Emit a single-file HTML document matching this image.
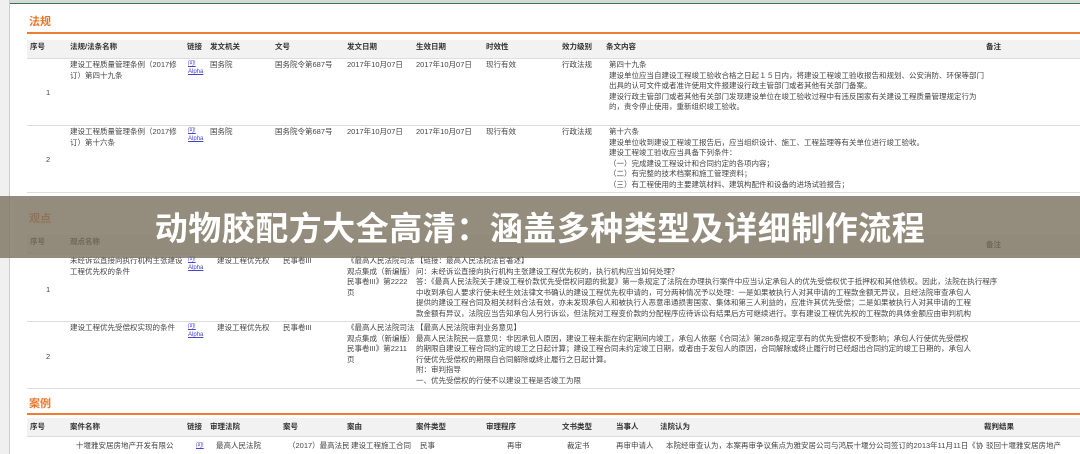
<!DOCTYPE html>
<html><head><meta charset="utf-8"><style>
*{margin:0;padding:0;box-sizing:border-box}
body{width:1080px;height:454px;overflow:hidden;background:#fff;position:relative;font-family:"Liberation Sans","Noto Sans CJK SC",sans-serif;font-size:7.5px;color:#444}
.a{position:absolute;white-space:nowrap;line-height:10.5px}
.gut{position:absolute;left:0;top:0;width:10px;height:454px;background:#f0f0f0;border-right:1px solid #ccc}
.top{position:absolute;left:0;top:0;width:1080px;height:4px;background:#d8d8d8;border-bottom:1px solid #2e7d4f}
.h{font-weight:bold;color:#333}
.st{position:absolute;left:29px;font-size:11px;font-weight:bold;color:#e8772e}
.ol{position:absolute;left:27px;width:1053px;height:2px;background:#ef7d35}
.hb{position:absolute;left:27px;width:1053px;height:19px;background:#f2f2f2;border-bottom:1px solid #ddd}
.ln{position:absolute;left:27px;width:1053px;height:1px;background:#ddd}
.lk{color:#4444cc;text-decoration:underline;font-size:6px;line-height:8px}
.ov{position:absolute;left:0;top:196px;width:1080px;height:62px;background:rgba(125,115,95,0.82)}
.tt{position:absolute;left:0;top:206px;width:1080px;text-align:center;font-size:33px;font-weight:bold;color:#fff;line-height:46px;letter-spacing:0.5px}
</style></head><body>
<div class="top"></div><div class="gut"></div>
<div class="st" style="top:13px">法规</div>
<div class="ol" style="top:32px"></div>
<div class="hb" style="top:40px"></div>
<div class="a h" style="left:30px;top:42px">序号</div><div class="a h" style="left:70px;top:42px">法规/法条名称</div><div class="a h" style="left:187px;top:42px">链接</div><div class="a h" style="left:210px;top:42px">发文机关</div><div class="a h" style="left:275px;top:42px">文号</div><div class="a h" style="left:347px;top:42px">发文日期</div><div class="a h" style="left:416px;top:42px">生效日期</div><div class="a h" style="left:486px;top:42px">时效性</div><div class="a h" style="left:562px;top:42px">效力级别</div><div class="a h" style="left:606px;top:42px">条文内容</div><div class="a h" style="left:986px;top:42px">备注</div>
<div class="a" style="left:46px;top:88px">1</div>
<div class="a" style="left:70px;top:60px">建设工程质量管理条例（2017修<br>订）第四十九条</div>
<div class="a lk" style="left:188px;top:60px">问!<br>Alpha</div>
<div class="a" style="left:210px;top:60px">国务院</div><div class="a" style="left:275px;top:60px">国务院令第687号</div><div class="a" style="left:347px;top:60px">2017年10月07日</div><div class="a" style="left:416px;top:60px">2017年10月07日</div><div class="a" style="left:486px;top:60px">现行有效</div><div class="a" style="left:562px;top:60px">行政法规</div>
<div class="a" style="left:609px;top:60px">第四十九条<br>建设单位应当自建设工程竣工验收合格之日起１５日内，将建设工程竣工验收报告和规划、公安消防、环保等部门<br>出具的认可文件或者准许使用文件报建设行政主管部门或者其他有关部门备案。<br>建设行政主管部门或者其他有关部门发现建设单位在竣工验收过程中有违反国家有关建设工程质量管理规定行为<br>的，责令停止使用，重新组织竣工验收。</div>
<div class="ln" style="top:125px"></div>
<div class="a" style="left:46px;top:155px">2</div>
<div class="a" style="left:70px;top:127px">建设工程质量管理条例（2017修<br>订）第十六条</div>
<div class="a lk" style="left:188px;top:127px">问!<br>Alpha</div>
<div class="a" style="left:210px;top:127px">国务院</div><div class="a" style="left:275px;top:127px">国务院令第687号</div><div class="a" style="left:347px;top:127px">2017年10月07日</div><div class="a" style="left:416px;top:127px">2017年10月07日</div><div class="a" style="left:486px;top:127px">现行有效</div><div class="a" style="left:562px;top:127px">行政法规</div>
<div class="a" style="left:609px;top:127px">第十六条<br>建设单位收到建设工程竣工报告后，应当组织设计、施工、工程监理等有关单位进行竣工验收。<br>建设工程竣工验收应当具备下列条件：<br>（一）完成建设工程设计和合同约定的各项内容；<br>（二）有完整的技术档案和施工管理资料；<br>（三）有工程使用的主要建筑材料、建筑构配件和设备的进场试验报告；</div>
<div class="ln" style="top:192px"></div>
<div class="st" style="top:210px">观点</div>
<div class="hb" style="top:235px"></div>
<div class="a h" style="left:30px;top:237px">序号</div><div class="a h" style="left:70px;top:237px">观点名称</div><div class="a h" style="left:986px;top:240px">备注</div>
<div class="a" style="left:46px;top:285px">1</div>
<div class="a" style="left:70px;top:256px">未经诉讼直接向执行机构主张建设<br>工程优先权的条件</div>
<div class="a lk" style="left:188px;top:256px">问!<br>Alpha</div>
<div class="a" style="left:217px;top:256px">建设工程优先权</div><div class="a" style="left:283px;top:256px">民事卷III</div>
<div class="a" style="left:347px;top:256px">《最高人民法院司法<br>观点集成（新编版）<br>民事卷III》第2222<br>页</div>
<div class="a" style="left:416px;top:256px">【链接：最高人民法院法官著述】<br>问：未经诉讼直接向执行机构主张建设工程优先权的，执行机构应当如何处理？<br>答：《最高人民法院关于建设工程价款优先受偿权问题的批复》第一条规定了法院在办理执行案件中应当认定承包人的优先受偿权优于抵押权和其他债权。因此，法院在执行程序<br>中收到承包人要求行使未经生效法律文书确认的建设工程优先权申请的，可分两种情况予以处理：一是如果被执行人对其申请的工程款金额无异议，且经法院审查承包人<br>提供的建设工程合同及相关材料合法有效，亦未发现承包人和被执行人恶意串通损害国家、集体和第三人利益的，应准许其优先受偿；二是如果被执行人对其申请的工程<br>款金额有异议，法院应当告知承包人另行诉讼，但法院对工程变价款的分配程序应待诉讼有结果后方可继续进行。享有建设工程优先权的工程款的具体金额应由审判机构</div>
<div class="ln" style="top:321px"></div>
<div class="a" style="left:46px;top:352px">2</div>
<div class="a" style="left:70px;top:323px">建设工程优先受偿权实现的条件</div>
<div class="a lk" style="left:188px;top:323px">问!<br>Alpha</div>
<div class="a" style="left:217px;top:323px">建设工程优先权</div><div class="a" style="left:283px;top:323px">民事卷III</div>
<div class="a" style="left:347px;top:323px">《最高人民法院司法<br>观点集成（新编版）<br>民事卷III》第2211<br>页</div>
<div class="a" style="left:416px;top:323px">【最高人民法院审判业务意见】<br>最高人民法院民一庭意见：非因承包人原因，建设工程未能在约定期间内竣工，承包人依据《合同法》第286条规定享有的优先受偿权不受影响；承包人行使优先受偿权<br>的期限自建设工程合同约定的竣工之日起计算；建设工程合同未约定竣工日期，或者由于发包人的原因，合同解除或终止履行时已经超出合同约定的竣工日期的，承包人<br>行使优先受偿权的期限自合同解除或终止履行之日起计算。<br>附：审判指导<br>一、优先受偿权的行使不以建设工程是否竣工为限</div>
<div class="ln" style="top:388px"></div>
<div class="st" style="top:395px">案例</div>
<div class="ol" style="top:413px"></div>
<div class="hb" style="top:418px"></div>
<div class="a h" style="left:30px;top:422px">序号</div><div class="a h" style="left:70px;top:422px">案件名称</div><div class="a h" style="left:187px;top:422px">链接</div><div class="a h" style="left:210px;top:422px">审理法院</div><div class="a h" style="left:283px;top:422px">案号</div><div class="a h" style="left:347px;top:422px">案由</div><div class="a h" style="left:416px;top:422px">案件类型</div><div class="a h" style="left:486px;top:422px">审理程序</div><div class="a h" style="left:562px;top:422px">文书类型</div><div class="a h" style="left:616px;top:422px">当事人</div><div class="a h" style="left:660px;top:422px">法院认为</div><div class="a h" style="left:984px;top:422px">裁判结果</div>
<div class="a" style="left:76px;top:441px">十堰雅安居房地产开发有限公</div><div class="a lk" style="left:196px;top:442px">问!</div><div class="a" style="left:216px;top:441px">最高人民法院</div><div class="a" style="left:288px;top:441px">（2017）最高法民</div><div class="a" style="left:351px;top:441px">建设工程施工合同</div><div class="a" style="left:420px;top:441px">民事</div><div class="a" style="left:507px;top:441px">再审</div><div class="a" style="left:567px;top:441px">裁定书</div><div class="a" style="left:616px;top:441px">再审申请人</div><div class="a" style="left:666px;top:441px">本院经审查认为，本案再审争议焦点为雅安居公司与鸿辰十堰分公司签订的2013年11月11日《协</div><div class="a" style="left:986px;top:441px">驳回十堰雅安居房地产</div>
<div class="ov"></div>
<div class="tt">动物胶配方大全高清：涵盖多种类型及详细制作流程</div>
</body></html>
